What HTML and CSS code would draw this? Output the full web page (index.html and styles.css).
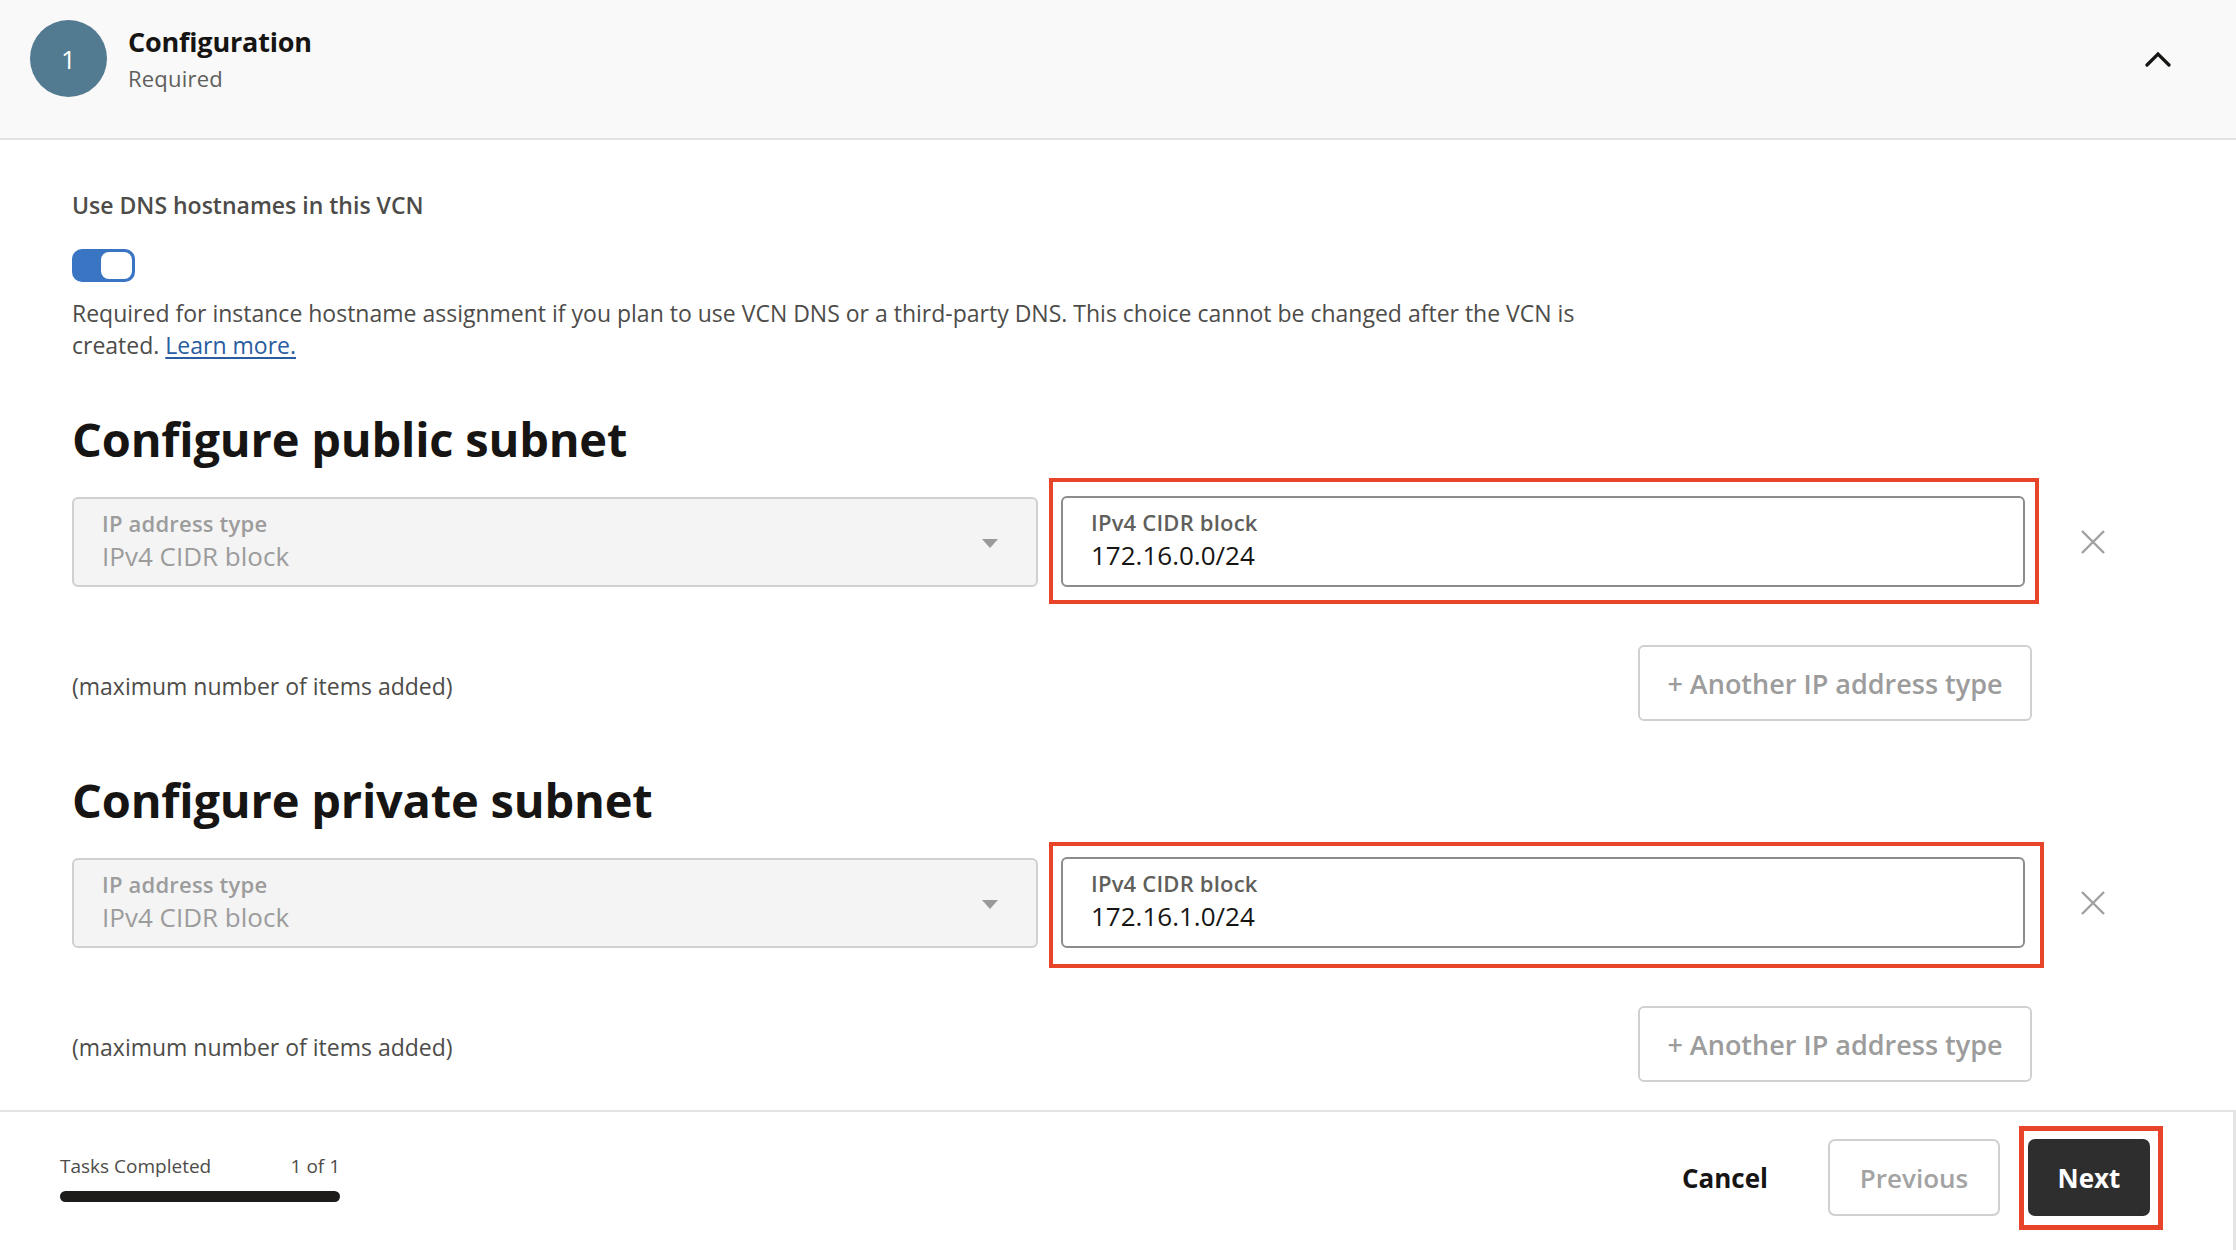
FILE: index.html
```html
<!DOCTYPE html>
<html lang="en">
<head>
<meta charset="utf-8">
<title>Configuration</title>
<link rel="stylesheet" href="styles.css">
</head>
<body>
<div class="page">
  <header class="step-header">
    <div class="step-num">1</div>
    <div class="step-titles">
      <div class="step-title">Configuration</div>
      <div class="step-sub">Required</div>
    </div>
    <svg class="chevron" width="26" height="16" viewBox="0 0 26 16" aria-hidden="true">
      <polyline points="2,14 13,3 24,14" fill="none" stroke="#161513" stroke-width="3.2" stroke-linecap="round" stroke-linejoin="miter"/>
    </svg>
  </header>

  <main class="content">
    <div class="field-label">Use DNS hostnames in this VCN</div>
    <div class="toggle"><span class="knob"></span></div>
    <p class="help">Required for instance hostname assignment if you plan to use VCN DNS or a third-party DNS. This choice cannot be changed after the VCN is created. <a href="#" class="link">Learn more.</a></p>

    <section class="subnet subnet-first">
      <h2 class="subnet-title">Configure public subnet</h2>
      <div class="ip-row">
        <div class="select">
          <div class="select-text">
            <div class="fld-label muted">IP address type</div>
            <div class="fld-value muted">IPv4 CIDR block</div>
          </div>
          <span class="caret"></span>
        </div>
        <div class="input hl hl-a">
          <div class="fld-label">IPv4 CIDR block</div>
          <div class="fld-value">172.16.0.0/24</div>
        </div>
        <div class="remove">
          <svg width="28" height="26" viewBox="0 0 28 26" aria-hidden="true">
            <path d="M3 2 L25 24 M25 2 L3 24" stroke="#a0a0a0" stroke-width="2.4" fill="none"/>
          </svg>
        </div>
      </div>
      <div class="add-row">
        <span class="max-note">(maximum number of items added)</span>
        <button class="add-btn">+ Another IP address type</button>
      </div>
    </section>

    <section class="subnet">
      <h2 class="subnet-title">Configure private subnet</h2>
      <div class="ip-row">
        <div class="select">
          <div class="select-text">
            <div class="fld-label muted">IP address type</div>
            <div class="fld-value muted">IPv4 CIDR block</div>
          </div>
          <span class="caret"></span>
        </div>
        <div class="input hl hl-b">
          <div class="fld-label">IPv4 CIDR block</div>
          <div class="fld-value">172.16.1.0/24</div>
        </div>
        <div class="remove">
          <svg width="28" height="26" viewBox="0 0 28 26" aria-hidden="true">
            <path d="M3 2 L25 24 M25 2 L3 24" stroke="#a0a0a0" stroke-width="2.4" fill="none"/>
          </svg>
        </div>
      </div>
      <div class="add-row">
        <span class="max-note">(maximum number of items added)</span>
        <button class="add-btn">+ Another IP address type</button>
      </div>
    </section>
  </main>

  <footer class="footer">
    <div class="progress">
      <div class="progress-head"><span>Tasks Completed</span><span>1 of 1</span></div>
      <div class="progress-bar"></div>
    </div>
    <div class="actions">
      <button class="btn-cancel">Cancel</button>
      <button class="btn-prev">Previous</button>
      <button class="btn-next hl-next">Next</button>
    </div>
  </footer>
</div>
</body>
</html>
```

FILE: styles.css
```css
* { box-sizing: border-box; }
html, body { margin: 0; padding: 0; }
body {
  font-family: "Open Sans", "Noto Sans", "Liberation Sans", sans-serif;
  color: #161513;
  background: #fff;
}
.page {
  width: 2236px;
  height: 1250px;
  display: flex;
  flex-direction: column;
  overflow: hidden;
}

/* header */
.step-header {
  height: 140px;
  flex: 0 0 140px;
  background: #f9f9f9;
  border-bottom: 2px solid #e3e3e3;
  display: flex;
  align-items: flex-start;
  padding: 20px 65px 0 30px;
}
.step-num {
  width: 77px;
  height: 77px;
  border-radius: 50%;
  background: #527a90;
  color: #fff;
  font-size: 26px;
  display: flex;
  align-items: center;
  justify-content: center;
  flex: 0 0 auto;
}
.step-titles {
  margin-left: 21px;
  padding-top: 6px;
  flex: 1;
}
.step-title {
  font-size: 27px;
  line-height: 32px;
  font-weight: 700;
  letter-spacing: -0.2px;
  color: #161513;
}
.step-sub {
  font-size: 22px;
  line-height: 30px;
  margin-top: 5px;
  letter-spacing: 0.2px;
  color: #605f5c;
}
.chevron {
  margin-top: 31px;
}

/* content */
.content {
  flex: 1;
  padding: 51px 0 0 72px;
  overflow: hidden;
}
.field-label {
  font-size: 23px;
  line-height: 28px;
  font-weight: 600;
  color: #4d4c49;
}
.toggle {
  margin-top: 30px;
  width: 63px;
  height: 33px;
  border-radius: 10px;
  background: #3a75c4;
  padding: 3px;
  display: flex;
  justify-content: flex-end;
}
.knob {
  width: 31px;
  height: 27px;
  background: #fff;
  border-radius: 8px;
}
.help {
  margin: 15px 0 0 0;
  max-width: 1560px;
  font-size: 23px;
  line-height: 32px;
  color: #4d4c49;
}
.link {
  color: #2a5d9f;
  text-decoration: underline;
  text-underline-offset: 3px;
}

.subnet { padding-top: 49px; }
.subnet-first { padding-top: 48px; }
.subnet-title {
  margin: 0;
  font-size: 47px;
  line-height: 60px;
  font-weight: 700;
  letter-spacing: -0.2px;
  color: #161513;
}
.ip-row {
  margin-top: 27px;
  display: flex;
  align-items: center;
}
.select {
  width: 966px;
  height: 90px;
  border: 2px solid #d0d0d0;
  border-radius: 6px;
  background: #f4f4f4;
  display: flex;
  align-items: flex-start;
  padding: 11px 38px 0 28px;
}
.select-text { flex: 1; }
.caret {
  margin-top: 29px;
  width: 0;
  height: 0;
  border-left: 8px solid transparent;
  border-right: 8px solid transparent;
  border-top: 9px solid #9a9a9a;
}
.input {
  margin-left: 23px;
  width: 964px;
  height: 91px;
  border: 2px solid #8c8c8c;
  border-radius: 6px;
  background: #fff;
  padding: 11px 28px 0 28px;
  position: relative;
}
.fld-label {
  font-size: 22px;
  line-height: 26px;
  font-weight: 600;
  letter-spacing: 0.2px;
  color: #605f5c;
}
.fld-value {
  margin-top: 5px;
  font-size: 26px;
  line-height: 30px;
  color: #161513;
}
.muted { color: #9c9c9c; }

.hl::after {
  content: "";
  position: absolute;
  border: 4px solid #e8442a;
  pointer-events: none;
}
.hl-a::after { left: -14px; right: -16px; top: -20px; bottom: -19px; }
.hl-b::after { left: -14px; right: -21px; top: -17px; bottom: -22px; }

.remove {
  width: 136px;
  display: flex;
  justify-content: center;
  align-items: center;
}

.add-row {
  margin-top: 58px;
  width: 1960px;
  display: flex;
  justify-content: space-between;
  align-items: center;
}
.max-note {
  font-size: 23px;
  color: #4d4c49;
  padding-top: 5px;
}
.add-btn {
  height: 76px;
  width: 394px;
  border: 2px solid #d0d0d0;
  border-radius: 6px;
  background: #fff;
  font-family: inherit;
  font-size: 27px;
  font-weight: 600;
  color: #9c9c9c;
  padding: 0;
}

/* footer */
.footer {
  flex: 0 0 140px;
  height: 140px;
  border-top: 2px solid #e4e4e4;
  border-right: 3px solid #e4e4e4;
  display: flex;
  justify-content: space-between;
  align-items: flex-start;
  padding: 27px 83px 0 60px;
}
.progress {
  width: 280px;
  margin-top: 15px;
}
.progress-head {
  display: flex;
  justify-content: space-between;
  font-size: 19px;
  line-height: 24px;
  color: #4d4c49;
}
.progress-bar {
  margin-top: 13px;
  height: 11px;
  border-radius: 6px;
  background: #1d1c1a;
}
.actions {
  display: flex;
  align-items: center;
  gap: 28px;
}
.actions button {
  font-family: inherit;
  font-size: 26px;
  font-weight: 700;
  height: 77px;
  border-radius: 7px;
  cursor: pointer;
}
.btn-cancel {
  background: transparent;
  border: none;
  color: #161513;
  padding: 0;
  margin-right: 32px;
}
.btn-prev {
  width: 172px;
  background: #fff;
  border: 2px solid #d0d0d0;
  color: #a3a3a3;
  font-weight: 600 !important;
}
.btn-next {
  width: 122px;
  background: #2e2e2e;
  border: none;
  color: #fff;
  position: relative;
}
.hl-next::after {
  content: "";
  position: absolute;
  left: -9px; right: -13px; top: -13px; bottom: -14px;
  border: 5px solid #e8442a;
  pointer-events: none;
}
```
